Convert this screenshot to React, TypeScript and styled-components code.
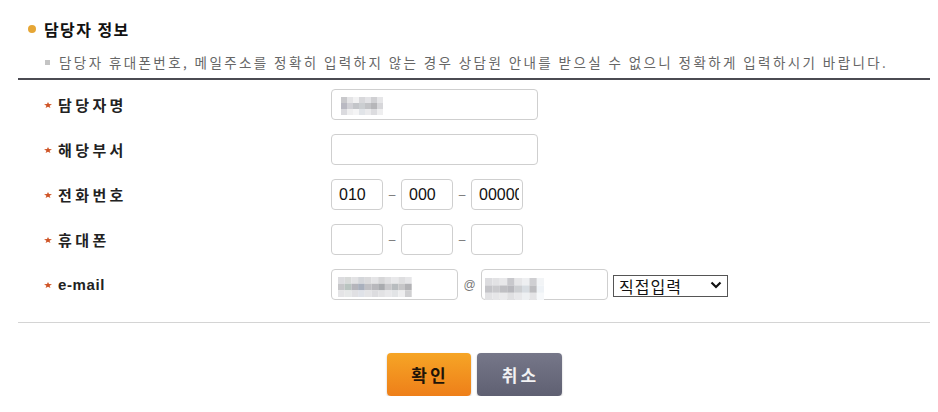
import React from "react";
import styled, { createGlobalStyle } from "styled-components";

const Global = createGlobalStyle`
  html, body { margin: 0; padding: 0; background: #fff; }
  body { font-family: "Noto Sans CJK KR", "Liberation Sans", sans-serif; color: #222; }
  * { box-sizing: border-box; }
`;

const Page = styled.div`
  width: 938px;
  padding: 0 8px 0 18px;
`;

const TitleRow = styled.div`
  display: flex;
  align-items: center;
  height: 20px;
  margin-top: 19px;
  padding-left: 10px;
  gap: 8px;
`;

const Dot = styled.span`
  width: 8px;
  height: 8px;
  border-radius: 50%;
  background: #e6a635;
`;

const Title = styled.h2`
  margin: 0;
  font-size: 16px;
  font-weight: 700;
  letter-spacing: 1.4px;
  color: #111;
  line-height: 20px;
`;

const DescRow = styled.div`
  display: flex;
  align-items: center;
  height: 20px;
  margin-top: 13px;
  padding-left: 27px;
  gap: 9px;
`;

const Square = styled.span`
  width: 5px;
  height: 5px;
  background: #c4c4c4;
`;

const Desc = styled.p`
  margin: 0;
  font-size: 13.5px;
  letter-spacing: 2.4px;
  color: #666;
  line-height: 20px;
  white-space: nowrap;
`;

const DarkRule = styled.div`
  height: 2px;
  background: #4b4b52;
  margin-top: 6px;
`;

const Form = styled.div`
  display: flex;
  flex-direction: column;
  gap: 14px;
  padding-top: 9px;
`;

const Row = styled.div`
  display: grid;
  grid-template-columns: 313px 1fr;
  align-items: center;
  height: 31px;
`;

const Label = styled.label`
  display: flex;
  align-items: center;
  gap: 6px;
  padding-left: 26px;
  font-size: 14px;
  font-weight: 700;
  color: #222;
`;

const LabelText = styled.span<{ $latin?: boolean }>`
  letter-spacing: ${(p) => (p.$latin ? "0.6px" : "3.4px")};
  font-family: ${(p) =>
    p.$latin ? '"Liberation Sans", Arial, sans-serif' : '"Noto Sans CJK KR", sans-serif'};
  font-size: ${(p) => (p.$latin ? "15px" : "15px")};
`;

const Fields = styled.div`
  display: flex;
  align-items: center;
`;

const Field = styled.div<{ $w: number }>`
  position: relative;
  width: ${(p) => p.$w}px;
  height: 31px;
`;

const Input = styled.input`
  width: 100%;
  height: 100%;
  border: 1px solid #cfcfcf;
  border-radius: 4px;
  padding: 0 3px 0 7px;
  font-family: "Liberation Sans", Arial, sans-serif;
  font-size: 16px;
  color: #111;
  background: #fff;
  outline: none;
`;

const Mosaic = styled.svg`
  position: absolute;
  pointer-events: none;
`;

const Dash = styled.span`
  width: 18px;
  text-align: center;
  color: #777;
  font-family: "Liberation Sans", Arial, sans-serif;
  font-size: 12px;
`;

const At = styled.span`
  width: 23px;
  text-align: center;
  color: #777;
  font-family: "Liberation Sans", Arial, sans-serif;
  font-size: 12px;
`;

const SelectWrap = styled.div`
  position: relative;
  margin-left: 5px;
  width: 115px;
  height: 22px;
`;

const Select = styled.select`
  appearance: none;
  width: 100%;
  height: 100%;
  border: 1px solid #555;
  border-radius: 0;
  background: #fff;
  padding: 0 0 0 5px;
  font-family: "Noto Sans CJK KR", sans-serif;
  font-size: 16px;
  letter-spacing: 1px;
  line-height: 20px;
  color: #111;
  outline: none;
`;

const Chevron = styled.svg`
  position: absolute;
  right: 6px;
  top: 7px;
  pointer-events: none;
`;

const LightRule = styled.div`
  height: 1px;
  background: #d4d4d4;
  margin-top: 22px;
`;

const Buttons = styled.div`
  display: flex;
  justify-content: center;
  gap: 6px;
  margin-top: 30px;
`;

const Button = styled.button<{ $primary?: boolean }>`
  width: ${(p) => (p.$primary ? "84px" : "85px")};
  height: 43px;
  border: none;
  border-radius: 4px;
  font-family: "Noto Sans CJK KR", sans-serif;
  font-size: 17px;
  font-weight: 700;
  letter-spacing: 3px;
  padding: 0 0 0 3px;
  color: ${(p) => (p.$primary ? "#1e1408" : "#f2f2f4")};
  background: ${(p) =>
    p.$primary
      ? "linear-gradient(#f6a526, #ee7f19)"
      : "linear-gradient(#767789, #5f6072)"};
  box-shadow: 0 1px 2px rgba(0, 0, 0, 0.25);
`;

const Star = () => (
  <svg width="8" height="6" viewBox="0 0 8 6">
    <path d="M4 0 L5 2 L8 2.2 L5.6 3.7 L6.4 6 L4 4.7 L1.6 6 L2.4 3.7 L0 2.2 L3 2 Z" fill="#cf5426" />
  </svg>
);

type Cell = [number, number, string];

const mosaicA: Cell[] = [
  [0, 0, "#c9c9cc"], [1, 0, "#e4e4e6"], [2, 0, "#f1f1f2"], [3, 0, "#d8d8db"], [4, 0, "#e3e3e6"], [5, 0, "#d0d0d3"], [6, 0, "#e6e6e8"],
  [0, 1, "#b9b9c2"], [1, 1, "#d1d1d6"], [2, 1, "#c3c5c9"], [3, 1, "#cbced1"], [4, 1, "#c2c3c6"], [5, 1, "#b6b6b9"], [6, 1, "#d7d7da"],
  [0, 2, "#dadade"], [1, 2, "#eeeeef"], [2, 2, "#f4f4f5"], [3, 2, "#e1e4e8"], [4, 2, "#eaeaec"], [5, 2, "#dcdcdf"], [6, 2, "#eeeeef"],
];

const mosaicB: Cell[] = [
  [0, 0, "#dcdcdf"], [1, 0, "#d8dad9"], [2, 0, "#e2e2e4"], [3, 0, "#d4d6da"], [4, 0, "#dadadc"], [5, 0, "#e4e4e6"], [6, 0, "#d6d6d8"], [7, 0, "#e0e0e2"], [8, 0, "#e8e8ea"], [9, 0, "#dedee0"], [10, 0, "#e6e6e8"],
  [0, 1, "#c6c6c9"], [1, 1, "#b9c4c0"], [2, 1, "#b5b5bb"], [3, 1, "#a9b0bd"], [4, 1, "#c0c0c4"], [5, 1, "#b8b8bc"], [6, 1, "#a9abaf"], [7, 1, "#c8c8cb"], [8, 1, "#b8bcbf"], [9, 1, "#c6c6c8"], [10, 1, "#b2b2b5"],
  [0, 2, "#e4e4e6"], [1, 2, "#e6e8e8"], [2, 2, "#e0e0e3"], [3, 2, "#dfe2e8"], [4, 2, "#e4e4e6"], [5, 2, "#dcdcdf"], [6, 2, "#e2e2e4"], [7, 2, "#e8e8ea"], [8, 2, "#e2e4e6"], [9, 2, "#eeeeef"], [10, 2, "#cfcfd1"],
];

const mosaicC: Cell[] = [
  [0, 0, "#dcdcdf"], [1, 0, "#e2e2e4"], [2, 0, "#e8e8ea"], [3, 0, "#c8c8cc"], [4, 0, "#e6e6e8"], [5, 0, "#eeeff1"], [6, 0, "#cfcfd2"], [7, 0, "#f2f4f6"],
  [0, 1, "#c4c4c8"], [1, 1, "#cacacd"], [2, 1, "#bfbfc3"], [3, 1, "#b8b8bd"], [4, 1, "#cdcfd2"], [5, 1, "#d8dde2"], [6, 1, "#bdbdc0"], [7, 1, "#eef2f6"],
  [0, 2, "#e2e2e4"], [1, 2, "#e6e6e8"], [2, 2, "#eaeaec"], [3, 2, "#e0e0e2"], [4, 2, "#e8e8ea"], [5, 2, "#eef0f2"], [6, 2, "#e4e4e6"], [7, 2, "#f6f8fa"],
];

const MosaicBlock = ({ cells, left, top, size }: { cells: Cell[]; left: number; top: number; size: number }) => {
  const cols = Math.max(...cells.map((c) => c[0])) + 1;
  const rows = Math.max(...cells.map((c) => c[1])) + 1;
  return (
    <Mosaic width={cols * size} height={rows * size} style={{ left, top }}>
      {cells.map(([x, y, c], i) => (
        <rect key={i} x={x * size} y={y * size} width={size} height={size} fill={c} />
      ))}
    </Mosaic>
  );
};

export default function App() {
  return (
    <>
      <Global />
      <Page>
        <TitleRow>
          <Dot />
          <Title>담당자 정보</Title>
        </TitleRow>
        <DescRow>
          <Square />
          <Desc>
            담당자 휴대폰번호, 메일주소를 정확히 입력하지 않는 경우 상담원 안내를 받으실 수 없으니 정확하게 입력하시기 바랍니다.
          </Desc>
        </DescRow>
        <DarkRule />
        <Form>
          <Row>
            <Label>
              <Star />
              <LabelText>담당자명</LabelText>
            </Label>
            <Fields>
              <Field $w={207}>
                <Input />
                <MosaicBlock cells={mosaicA} left={10} top={8} size={6} />
              </Field>
            </Fields>
          </Row>
          <Row>
            <Label>
              <Star />
              <LabelText>해당부서</LabelText>
            </Label>
            <Fields>
              <Field $w={207}>
                <Input />
              </Field>
            </Fields>
          </Row>
          <Row>
            <Label>
              <Star />
              <LabelText>전화번호</LabelText>
            </Label>
            <Fields>
              <Field $w={52}>
                <Input defaultValue="010" />
              </Field>
              <Dash>–</Dash>
              <Field $w={52}>
                <Input defaultValue="000" />
              </Field>
              <Dash>–</Dash>
              <Field $w={52}>
                <Input defaultValue="00000" />
              </Field>
            </Fields>
          </Row>
          <Row>
            <Label>
              <Star />
              <LabelText>휴대폰</LabelText>
            </Label>
            <Fields>
              <Field $w={52}>
                <Input />
              </Field>
              <Dash>–</Dash>
              <Field $w={52}>
                <Input />
              </Field>
              <Dash>–</Dash>
              <Field $w={52}>
                <Input />
              </Field>
            </Fields>
          </Row>
          <Row>
            <Label>
              <Star />
              <LabelText $latin>e-mail</LabelText>
            </Label>
            <Fields>
              <Field $w={127}>
                <Input />
                <MosaicBlock cells={mosaicB} left={7} top={8} size={6.7} />
              </Field>
              <At>@</At>
              <Field $w={127}>
                <Input />
                <MosaicBlock cells={mosaicC} left={4} top={9} size={7.4} />
              </Field>
              <SelectWrap>
                <Select defaultValue="direct">
                  <option value="direct">직접입력</option>
                </Select>
                <Chevron width="12" height="8" viewBox="0 0 12 8">
                  <path d="M1.5 1.5 L6 6 L10.5 1.5" fill="none" stroke="#111" strokeWidth="2.2" />
                </Chevron>
              </SelectWrap>
            </Fields>
          </Row>
        </Form>
        <LightRule />
        <Buttons>
          <Button $primary>확인</Button>
          <Button>취소</Button>
        </Buttons>
      </Page>
    </>
  );
}
